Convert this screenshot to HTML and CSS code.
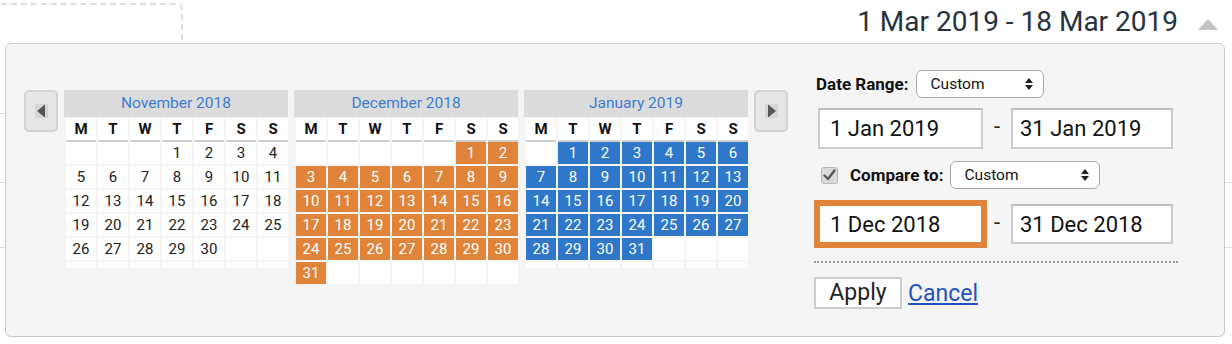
FILE: index.html
```html
<!DOCTYPE html>
<html>
<head>
<meta charset="utf-8">
<link rel="stylesheet" href="styles.css">
</head>
<body>
<div class="topbar">
  <div class="dashbox"></div>
  <div class="spacer"></div>
  <div class="range-text">1 Mar 2019 - 18 Mar 2019</div>
  <svg class="caret" width="20" height="11" viewBox="0 0 20 11"><polygon points="0,11 10,0 20,11" fill="#c4c4c4"/></svg>
</div>

<div class="panel">
  <div class="cals">
    <div class="nav">
      <svg width="13" height="14" viewBox="0 0 13 14"><rect x="0" y="0" width="13" height="14" fill="#d6d6d6"/><polygon points="2,7 10,0.5 10,13.5" fill="#555"/></svg>
    </div>

    <div class="month">
      <div class="month-title">November 2018</div>
      <div class="body">
        <div class="wk"><span>M</span><span>T</span><span>W</span><span>T</span><span>F</span><span>S</span><span>S</span></div>
        <div class="week"><span></span><span></span><span></span><span>1</span><span>2</span><span>3</span><span>4</span></div>
        <div class="week"><span>5</span><span>6</span><span>7</span><span>8</span><span>9</span><span>10</span><span>11</span></div>
        <div class="week"><span>12</span><span>13</span><span>14</span><span>15</span><span>16</span><span>17</span><span>18</span></div>
        <div class="week"><span>19</span><span>20</span><span>21</span><span>22</span><span>23</span><span>24</span><span>25</span></div>
        <div class="week"><span>26</span><span>27</span><span>28</span><span>29</span><span>30</span><span></span><span></span></div>
        <div class="week empty"><span></span><span></span><span></span><span></span><span></span><span></span><span></span></div>
      </div>
    </div>

    <div class="month">
      <div class="month-title">December 2018</div>
      <div class="body">
        <div class="wk"><span>M</span><span>T</span><span>W</span><span>T</span><span>F</span><span>S</span><span>S</span></div>
        <div class="week"><span></span><span></span><span></span><span></span><span></span><span class="cmp">1</span><span class="cmp">2</span></div>
        <div class="week"><span class="cmp">3</span><span class="cmp">4</span><span class="cmp">5</span><span class="cmp">6</span><span class="cmp">7</span><span class="cmp">8</span><span class="cmp">9</span></div>
        <div class="week"><span class="cmp">10</span><span class="cmp">11</span><span class="cmp">12</span><span class="cmp">13</span><span class="cmp">14</span><span class="cmp">15</span><span class="cmp">16</span></div>
        <div class="week"><span class="cmp">17</span><span class="cmp">18</span><span class="cmp">19</span><span class="cmp">20</span><span class="cmp">21</span><span class="cmp">22</span><span class="cmp">23</span></div>
        <div class="week"><span class="cmp">24</span><span class="cmp">25</span><span class="cmp">26</span><span class="cmp">27</span><span class="cmp">28</span><span class="cmp">29</span><span class="cmp">30</span></div>
        <div class="week"><span class="cmp">31</span><span></span><span></span><span></span><span></span><span></span><span></span></div>
      </div>
    </div>

    <div class="month">
      <div class="month-title">January 2019</div>
      <div class="body">
        <div class="wk"><span>M</span><span>T</span><span>W</span><span>T</span><span>F</span><span>S</span><span>S</span></div>
        <div class="week"><span></span><span class="sel">1</span><span class="sel">2</span><span class="sel">3</span><span class="sel">4</span><span class="sel">5</span><span class="sel">6</span></div>
        <div class="week"><span class="sel">7</span><span class="sel">8</span><span class="sel">9</span><span class="sel">10</span><span class="sel">11</span><span class="sel">12</span><span class="sel">13</span></div>
        <div class="week"><span class="sel">14</span><span class="sel">15</span><span class="sel">16</span><span class="sel">17</span><span class="sel">18</span><span class="sel">19</span><span class="sel">20</span></div>
        <div class="week"><span class="sel">21</span><span class="sel">22</span><span class="sel">23</span><span class="sel">24</span><span class="sel">25</span><span class="sel">26</span><span class="sel">27</span></div>
        <div class="week"><span class="sel">28</span><span class="sel">29</span><span class="sel">30</span><span class="sel">31</span><span></span><span></span><span></span></div>
        <div class="week empty"><span></span><span></span><span></span><span></span><span></span><span></span><span></span></div>
      </div>
    </div>

    <div class="nav">
      <svg width="13" height="14" viewBox="0 0 13 14"><rect x="0" y="0" width="13" height="14" fill="#d6d6d6"/><polygon points="3,0.5 11,7 3,13.5" fill="#555"/></svg>
    </div>
  </div>

  <div class="controls">
    <div class="row row-range">
      <span class="lbl">Date Range:</span>
      <div class="select sel-range">
        <span>Custom</span>
        <svg width="8" height="12" viewBox="0 0 8 12"><polygon points="0,5 4,0 8,5" fill="#222"/><polygon points="0,7 4,12 8,7" fill="#222"/></svg>
      </div>
    </div>
    <div class="row row-inputs">
      <input class="date in-a" type="text" value="1 Jan 2019">
      <span class="dash">-</span>
      <input class="date in-b" type="text" value="31 Jan 2019">
    </div>
    <div class="row row-compare">
      <span class="check">
        <svg width="13" height="12" viewBox="0 0 13 12"><path d="M1.5 6.5 L5 10 L11.5 1.5" fill="none" stroke="#555" stroke-width="2.4" stroke-linecap="round" stroke-linejoin="round"/></svg>
      </span>
      <span class="lbl cmp-lbl">Compare to:</span>
      <div class="select sel-compare">
        <span>Custom</span>
        <svg width="8" height="12" viewBox="0 0 8 12"><polygon points="0,5 4,0 8,5" fill="#222"/><polygon points="0,7 4,12 8,7" fill="#222"/></svg>
      </div>
    </div>
    <div class="row row-inputs row-inputs2">
      <input class="date in-a focus" type="text" value="1 Dec 2018">
      <span class="dash">-</span>
      <input class="date in-b" type="text" value="31 Dec 2018">
    </div>
    <div class="dots"></div>
    <div class="row row-actions">
      <button class="apply" type="button">Apply</button>
      <a class="cancel" href="#">Cancel</a>
    </div>
  </div>
</div>
</body>
</html>
```
FILE: styles.css
```css
html, body {
  margin: 0;
  padding: 0;
}
body {
  width: 1232px;
  height: 344px;
  overflow: hidden;
  background-color: #fff;
  background-image:
    linear-gradient(#dedede, #dedede),
    linear-gradient(#dedede, #dedede),
    linear-gradient(#dedede, #dedede);
  background-size: 10px 1px, 100% 1px, 100% 1px;
  background-position: 0 113px, 0 182px, 0 247px;
  background-repeat: no-repeat;
  font-family: Roboto, "Liberation Sans", sans-serif;
  color: #222;
}

/* top bar */
.topbar {
  display: flex;
  align-items: flex-start;
  height: 43px;
}
.dashbox {
  margin-left: -10px;
  margin-top: 3px;
  width: 193px;
  height: 40px;
  border: 2px dashed #dcdcdc;
  border-bottom: none;
  border-top-right-radius: 6px;
  box-sizing: border-box;
}
.spacer { flex: 1; }
.range-text {
  margin-top: 8px;
  font-size: 28px;
  line-height: 28px;
  color: #27323f;
  white-space: nowrap;
}
.caret {
  margin-top: 19px;
  margin-left: 20px;
  margin-right: 14px;
}

/* panel */
.panel {
  margin-left: 5px;
  width: 1220px;
  height: 294px;
  box-sizing: border-box;
  border: 1px solid #c9c9c9;
  border-radius: 6px;
  background: #f5f5f5;
  padding: 26px 0 0 18px;
  display: flex;
  align-items: flex-start;
}
.cals {
  margin-top: 20px;
  display: flex;
  align-items: flex-start;
  gap: 6px;
}
.nav {
  width: 34px;
  height: 42px;
  box-sizing: border-box;
  border: 2px solid #d2d2d2;
  border-radius: 5px;
  background: #e6e6e6;
  display: flex;
  align-items: center;
  justify-content: center;
}
.month {
  width: 224px;
}
.month-title {
  height: 27px;
  line-height: 27px;
  background: #dcdcdc;
  color: #3a7cd3;
  font-size: 15.5px;
  text-align: center;
}
.body {
  padding-left: 2px;
  margin-top: 1px;
}
.wk, .week {
  display: grid;
  grid-template-columns: repeat(7, 30px);
  column-gap: 2px;
}
.wk span {
  height: 22px;
  line-height: 22px;
  background: #fff;
  border-bottom: 2px solid #cfcfcf;
  text-align: center;
  font-weight: bold;
  font-size: 15px;
  color: #111;
}
.week {
  margin-bottom: 2px;
}
.week span {
  height: 22px;
  line-height: 22px;
  background: #fff;
  text-align: center;
  font-size: 15px;
  color: #222;
}
.week.empty span {
  height: 6px;
}
.week span.cmp {
  background: #e0843a;
  color: #fff;
}
.week span.sel {
  background: #2f77c9;
  color: #fff;
}

/* controls */
.controls {
  margin-left: 26px;
  width: 370px;
}
.row {
  display: flex;
  align-items: center;
}
.lbl {
  font-weight: bold;
  font-size: 17px;
  color: #111;
}
.row-range {
  height: 28px;
  padding-left: 2px;
}
.select {
  height: 28px;
  box-sizing: border-box;
  border: 1px solid #a9a9a9;
  border-radius: 6px;
  background: #fff;
  display: flex;
  align-items: center;
  justify-content: space-between;
  padding: 0 10px 0 14px;
  font-size: 15.5px;
  color: #111;
}
.sel-range {
  margin-left: 7px;
  width: 128px;
}
.row-inputs {
  margin-top: 10px;
  height: 41px;
  padding-left: 4px;
}
.date {
  height: 41px;
  box-sizing: border-box;
  border: 2px solid #cbcbcb;
  border-top-color: #bdbdbd;
  background: #fff;
  font-family: Roboto, "Liberation Sans", sans-serif;
  font-size: 22px;
  color: #111;
  margin: 0;
  outline: none;
}
.in-a {
  width: 165px;
  padding: 0 0 0 10px;
}
.in-b {
  width: 162px;
  padding: 0 0 0 7px;
}
.dash {
  width: 28px;
  text-align: center;
  font-size: 22px;
  color: #222;
  margin-top: -4px;
}
.row-compare {
  margin-top: 12px;
  height: 28px;
}
.check {
  margin-left: 7px;
  width: 17px;
  height: 17px;
  box-sizing: border-box;
  border: 1px solid #b8b8b8;
  border-radius: 3px;
  background: #dcdcdc;
  display: flex;
  align-items: center;
  justify-content: center;
}
.cmp-lbl {
  margin-left: 12px;
}
.sel-compare {
  margin-left: 6px;
  width: 150px;
}
.row-inputs2 {
  margin-top: 15px;
  height: 40px;
}
.row-inputs2 .date {
  height: 40px;
}
.date.focus {
  border-color: #e0843a;
  box-shadow: 0 0 0 4px #e0843a;
}
.dots {
  margin-top: 17px;
  width: 364px;
  border-top: 2px dotted #9a9a9a;
}
.row-actions {
  margin-top: 14px;
}
.apply {
  width: 88px;
  height: 32px;
  box-sizing: border-box;
  border: 2px solid #cdcdcd;
  background: #fff;
  font-family: Roboto, "Liberation Sans", sans-serif;
  font-size: 23px;
  color: #222;
  padding: 0;
  margin: 0;
  line-height: 28px;
}
.cancel {
  margin-left: 6px;
  font-size: 23px;
  color: #2350c2;
  text-decoration: underline;
}
```
